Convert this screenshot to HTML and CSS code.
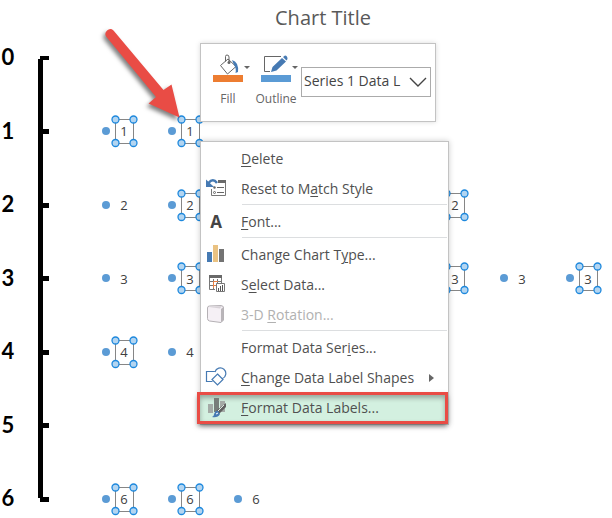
FILE: index.html
```html
<!DOCTYPE html>
<html lang="en">
<head>
<meta charset="utf-8">
<title>Chart Title</title>
<link rel="stylesheet" href="styles.css">
</head>
<body>
<main class="workspace">
  <svg class="chart" viewBox="0 0 612 518" role="img" aria-label="Chart Title">
    <defs>
      <circle id="dot" r="4"/>
      <g id="frame">
        <path class="frame-line" d="M9.500-11.500h18v24h-18z"/>
        <circle class="handle" cx="9.500" cy="-11.500" r="3.500"/>
        <circle class="handle" cx="27.500" cy="-11.500" r="3.500"/>
        <circle class="handle" cx="9.500" cy="12" r="3.500"/>
        <circle class="handle" cx="27.500" cy="12" r="3.500"/>
      </g>
    </defs>
    <text class="chart-title" x="323" y="25">Chart Title</text>
    <g class="axis">
      <path d="M38 59h5V498h-5zM40 56h9v4h-9zM43 129h6v5h-6zM43 203h6v5h-6zM43 276h6v5h-6zM43 350h6v5h-6zM43 423h6v5h-6zM40 497h9v5h-9z"/>
      <text x="8" y="65">0</text>
      <text x="8" y="139">1</text>
      <text x="8" y="212">2</text>
      <text x="8" y="286">3</text>
      <text x="8" y="359">4</text>
      <text x="8" y="433">5</text>
      <text x="8" y="506">6</text>
    </g>
    <g class="points">
      <g transform="translate(106 131)"><use href="#dot"/><use href="#frame"/><text x="18" y="5">1</text></g>
      <g transform="translate(172 131)"><use href="#dot"/><use href="#frame"/><text x="18" y="5">1</text></g>
      <g transform="translate(106 205)"><use href="#dot"/><text x="18" y="5">2</text></g>
      <g transform="translate(172 205)"><use href="#dot"/><use href="#frame"/><text x="18" y="5">2</text></g>
      <g transform="translate(437 205)"><use href="#dot"/><use href="#frame"/><text x="18" y="5">2</text></g>
      <g transform="translate(106 278)"><use href="#dot"/><text x="18" y="6">3</text></g>
      <g transform="translate(172 278)"><use href="#dot"/><use href="#frame"/><text x="18" y="6">3</text></g>
      <g transform="translate(437 278)"><use href="#dot"/><use href="#frame"/><text x="18" y="6">3</text></g>
      <g transform="translate(504 278)"><use href="#dot"/><text x="18" y="6">3</text></g>
      <g transform="translate(570 278)"><use href="#dot"/><use href="#frame"/><text x="18" y="6">3</text></g>
      <g transform="translate(106 352)"><use href="#dot"/><use href="#frame"/><text x="18" y="5">4</text></g>
      <g transform="translate(172 352)"><use href="#dot"/><text x="18" y="5">4</text></g>
      <g transform="translate(106 499)"><use href="#dot"/><use href="#frame"/><text x="18" y="5">6</text></g>
      <g transform="translate(172 499)"><use href="#dot"/><use href="#frame"/><text x="18" y="5">6</text></g>
      <g transform="translate(238 499)"><use href="#dot"/><text x="18" y="5">6</text></g>
    </g>
    <path class="arrow" d="M113.500 30.500L163.500 90L171.500 84.500L179.500 117.500L148.500 103.500L156 97L106.500 37A4.800 4.800 0 0 1 113.500 30.500z"/>
  </svg>

  <div class="mini-toolbar" role="toolbar" aria-label="Format">
    <button class="tool" type="button">
      <svg class="tool-icon" viewBox="0 0 36 28" aria-hidden="true">
        <path class="stroke-grey" d="M8.500 11.500L16 5l8 7.500-8.500 7.500zM13.500 7.500V2.500Q13.500 1 15 1Q17 1 17 3v5"/>
        <circle cx="17" cy="8.500" r="1.500" fill="#666"/>
        <path d="M20 6q7 2 6 12l-2.500 1q1-5-1.500-8z" fill="#467ab3"/>
        <path d="M32 12h6l-3 3z" fill="#666"/>
        <path d="M1 21h30v7H1z" fill="#ed7d31"/>
      </svg>
      <span>Fill</span>
    </button>
    <button class="tool" type="button">
      <svg class="tool-icon" viewBox="0 0 36 28" aria-hidden="true">
        <path class="stroke-grey" d="M21 2.500H4.500v15H10"/>
        <path d="M11 18l1.500-5L22 4l4 3.500-9.500 9zM23 3l2-1.500q2.500 0 2.500 3.500L26.500 6.500z" fill="#467ab3"/>
        <path d="M32 12h6l-3 3z" fill="#666"/>
        <path d="M1 21h30v7H1z" fill="#5b9bd5"/>
      </svg>
      <span>Outline</span>
    </button>
    <div class="picker">
      <select aria-label="Chart element"><option>Series 1 Data L</option></select>
      <svg class="chevron" viewBox="0 0 18 10" aria-hidden="true"><path d="M1 1l8 8 8-8"/></svg>
    </div>
  </div>

  <div class="menu" role="menu">
    <button class="item" type="button" role="menuitem"><span class="icon"></span><span><u>D</u>elete</span></button>
    <button class="item" type="button" role="menuitem">
      <svg class="icon" viewBox="0 0 22 22" aria-hidden="true">
        <path d="M13 3.500h7.500v14h-14V11" fill="none" stroke="#777"/>
        <path d="M13 2h8v3h-8z" fill="#6a6a6a"/>
        <path d="M12 9.500h7M12 14.500h7" stroke="#666"/>
        <circle cx="9.500" cy="9.500" r="1.200" fill="#666"/><circle cx="9.500" cy="14.500" r="1" fill="none" stroke="#666"/>
        <path d="M12 5Q8-.5 3.500 5" fill="none" stroke="#467ab3" stroke-width="2.500"/>
        <path d="M1 1.500V9h8z" fill="#467ab3"/>
      </svg>
      <span>Reset to M<u>a</u>tch Style</span>
    </button>
    <hr>
    <button class="item" type="button" role="menuitem"><span class="icon letter" aria-hidden="true">A</span><span><u>F</u>ont...</span></button>
    <hr>
    <button class="item" type="button" role="menuitem">
      <svg class="icon" viewBox="0 0 22 22" aria-hidden="true">
        <path d="M2 8h5v10H2z" fill="#467ab3"/><path d="M8 1h5v17H8z" fill="#eac282"/><path d="M14 5h5v13h-5z" fill="#737373"/>
      </svg>
      <span>Change Chart T<u>y</u>pe...</span>
    </button>
    <button class="item" type="button" role="menuitem">
      <svg class="icon" viewBox="0 0 22 22" aria-hidden="true">
        <path d="M4.500 2.500h12V9M4.500 2v13.500H10M4 7.500h12M4 11.500h5M8.500 5v10M12.500 5v4" fill="none" stroke="#777"/>
        <path d="M4 1h13v3H4z" fill="#696969"/>
        <path d="M13 7.500H8.500v4H12M8.500 11v3" fill="none" stroke="#e98043"/>
        <path d="M11.500 9.500h8v8h-8z" fill="#fff" stroke="#777"/><path d="M13 14h1v3h-1zM15 12h1v5h-1zM17 11h1v6h-1z" fill="#555"/>
      </svg>
      <span>S<u>e</u>lect Data...</span>
    </button>
    <button class="item" type="button" role="menuitem" disabled>
      <svg class="icon" viewBox="0 0 22 22" aria-hidden="true">
        <path d="M2.500 4Q2.500 2 4.500 2L16 1.500Q19 2 18.500 4v12L16 18.500 4.500 17Q2.500 16.500 2.500 14.500z" fill="#f5f0f5" stroke="#b5b1b5"/>
        <path d="M16 5l2.500-2v13L16 18.500z" fill="#b9b5b9"/><path d="M4 3l13-1-2 2.500z" fill="#d7d2d7"/>
      </svg>
      <span>3-D <u>R</u>otation...</span>
    </button>
    <hr>
    <button class="item" type="button" role="menuitem"><span class="icon"></span><span>Format Data Ser<u>i</u>es...</span></button>
    <button class="item" type="button" role="menuitem">
      <svg class="icon" viewBox="0 0 22 22" aria-hidden="true">
        <path d="M9.500 4.500h-8v10h6M10 5A5.500 5.500 0 1 1 17.500 11.500M12.500 7l5.500 5.500-5.500 5.500L7 12.500z" fill="none" stroke="#467ab3" stroke-width="1.200"/>
      </svg>
      <span><u>C</u>hange Data Label Shapes</span>
      <svg class="submenu" viewBox="0 0 5 8" aria-hidden="true"><path d="M0 0l5 4-5 4z"/></svg>
    </button>
    <button class="item highlighted" type="button" role="menuitem">
      <svg class="icon" viewBox="0 0 22 22" aria-hidden="true">
        <path d="M3 7h5v9H3zM15 4h5v11h-5z" fill="#a4aaa6"/><path d="M9 1h5v14H9z" fill="#777d79"/>
        <path d="M21 6v4l-7 7-3-3z" fill="#606060"/><path d="M19 8l-6 6" stroke="#dce8e0"/>
        <path d="M7 20q2-1 2.500-4 1-3 3.500-2l2 3q-2 4-8 3z" fill="#467ab3"/><path d="M11 17l2-1" stroke="#fff"/>
      </svg>
      <span><u>F</u>ormat Data Labels...</span>
    </button>
  </div>
</main>
</body>
</html>
```

FILE: styles.css
```css
* { box-sizing: border-box; }

body {
  margin: 0;
  background: #fff;
  color: #505050;
  font: 14px/20px "Open Sans", "Noto Sans", sans-serif;
}

.workspace { position: relative; overflow: hidden; }

.chart { display: block; width: 100%; height: auto; }
.chart-title { font-size: 20px; text-anchor: middle; fill: #595959; }

.axis { fill: #000; }
.axis text { font: 700 22px Lato, "Open Sans", sans-serif; text-anchor: middle; }

.points { fill: #5b9bd5; }
.points text { font-size: 13px; text-anchor: middle; fill: #404040; }
.frame-line { fill: none; stroke: #868686; }
.handle { fill: #b3d5f1; stroke: #1d88dd; stroke-width: 1.3px; }

.arrow { fill: #e94c45; filter: drop-shadow(-2px 3px 2px rgba(0, 0, 0, 0.5)); }

button, select { font: inherit; color: inherit; }

.mini-toolbar {
  position: absolute;
  top: 43px;
  left: 200px;
  display: flex;
  align-items: flex-start;
  width: 236px;
  height: 79px;
  padding: 10px 4px 9px 11px;
  border: 1px solid #c3c3c3;
  background: #fff;
  box-shadow: 0 0 5px rgba(0, 0, 0, 0.15);
}

.tool {
  display: flex;
  flex-direction: column;
  align-items: flex-start;
  gap: 8px;
  width: 48px;
  padding: 0;
  border: 0;
  background: none;
  font-size: 12px;
  line-height: 18px;
  color: #666;
}
.tool span { width: 32px; display: flex; justify-content: center; }
.tool-icon { width: 36px; height: 28px; overflow: visible; }
.stroke-grey { fill: none; stroke: #666; }

.picker { position: relative; flex: 1; margin: 13px 0 0 -7px; }
.picker select {
  display: block;
  width: 100%;
  height: 30px;
  padding: 0 28px 2px 2px;
  appearance: none;
  border: 1px solid #ababab;
  border-radius: 0;
  background: #fff;
  color: #444;
}
.chevron {
  position: absolute;
  right: 4px;
  top: 10px;
  width: 18px;
  height: 10px;
  fill: none;
  stroke: #444;
  stroke-width: 1.4px;
  pointer-events: none;
}

.menu {
  position: absolute;
  top: 141px;
  left: 200px;
  width: 249px;
  padding: 2px 0 1px;
  border: 1px solid #c3c3c3;
  background: #fff;
  box-shadow: 0 0 6px rgba(0, 0, 0, 0.2);
}
.menu hr { height: 1px; margin: 0 1px 2px 41px; border: 0; background: #dcdee0; }

.item {
  display: flex;
  align-items: center;
  width: 100%;
  height: 30px;
  padding: 0 14px 0 4px;
  border: 0;
  background: none;
  text-align: left;
  white-space: nowrap;
}
.item:disabled { color: #b1b1b1; }
.item u { text-underline-offset: 2px; text-decoration-thickness: 1px; }
.icon { flex: none; width: 22px; height: 22px; margin-right: 14px; }
.letter {
  display: flex;
  align-items: center;
  justify-content: center;
  font-size: 17px;
  font-weight: 700;
  color: #444;
}
.submenu { width: 5px; height: 8px; margin-left: auto; fill: #666; }

.highlighted {
  width: calc(100% + 2px);
  margin-left: -3px;
  padding-left: 7px;
  background: #d3f0e0;
  outline: 3px solid #e94c45;
  outline-offset: -2px;
  box-shadow: 0 3px 5px rgba(0, 0, 0, 0.5), inset 0 3px 5px 2px rgba(0, 0, 0, 0.3);
}
```
